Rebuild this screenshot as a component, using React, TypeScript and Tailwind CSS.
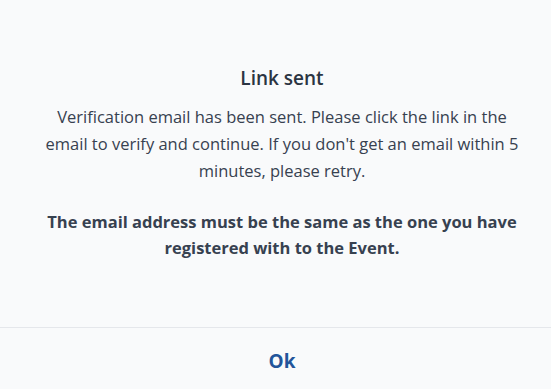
import React from "react";

export default function App() {
  return (
    <div
      className="flex h-[389px] w-[551px] flex-col bg-[#f9fafb] text-[#374150]"
      style={{ fontFamily: '"Open Sans", sans-serif' }}
    >
      <div className="flex flex-1 flex-col items-center pl-[40px] pr-[27px] pt-[65px] text-center">
        <h1 className="text-[19px] font-semibold leading-[26px] text-[#2b3442]">Link sent</h1>
        <p className="mt-[12px] text-[16.5px] leading-[27px]">
          Verification email has been sent. Please click the link in the email to verify and continue. If you don't get an email within 5 minutes, please retry.
        </p>
        <p className="mt-[25px] text-[16.5px] font-bold leading-[26px]">
          The email address must be the same as the one you have registered with to the Event.
        </p>
      </div>
      <div className="h-px bg-[#e5e7eb]" />
      <div className="flex h-[61px] items-center justify-center pl-[13px] pt-[6px]">
        <button className="text-[19px] font-bold text-[#22559a]">Ok</button>
      </div>
    </div>
  );
}
